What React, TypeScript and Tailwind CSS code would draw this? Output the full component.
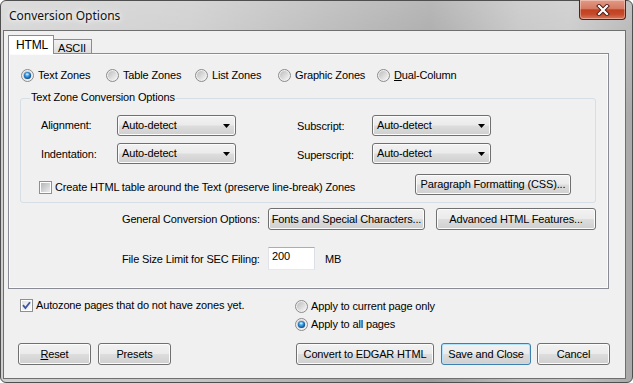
import React from "react";

const BTN_BG =
  "bg-[linear-gradient(180deg,#f2f2f2_0%,#ebebeb_48%,#dddddd_52%,#cfcfcf_100%)]";

function Radio({ checked = false }: { checked?: boolean }) {
  return (
    <svg width="13" height="13" viewBox="0 0 13 13" className="shrink-0">
      <defs>
        <linearGradient id="radioIn" x1="0" y1="0" x2="1" y2="1">
          <stop offset="0" stopColor="#bdbdbd" />
          <stop offset="1" stopColor="#f6f6f6" />
        </linearGradient>
        <radialGradient id="radioDot" cx="0.45" cy="0.4" r="0.6">
          <stop offset="0" stopColor="#7fd3ff" />
          <stop offset="0.55" stopColor="#2a8ad4" />
          <stop offset="1" stopColor="#0d3f78" />
        </radialGradient>
      </defs>
      <circle cx="6.5" cy="6.5" r="6" fill="#efefef" stroke="#8a8a8a" />
      <circle cx="6.5" cy="6.5" r="4.5" fill="url(#radioIn)" />
      {checked && (
        <>
          <circle cx="6.5" cy="6.5" r="3.6" fill="url(#radioDot)" />
          <ellipse cx="6.2" cy="5.2" rx="1.6" ry="1" fill="#ffffff" opacity="0.55" />
        </>
      )}
    </svg>
  );
}

function Check({ checked = false }: { checked?: boolean }) {
  return (
    <svg width="13" height="13" viewBox="0 0 13 13" className="shrink-0">
      <defs>
        <linearGradient id="chkIn" x1="0" y1="0" x2="1" y2="1">
          <stop offset="0" stopColor="#b3b6bb" />
          <stop offset="1" stopColor="#ececec" />
        </linearGradient>
        <linearGradient id="chkOn" x1="0" y1="0" x2="1" y2="1">
          <stop offset="0" stopColor="#dfe2e6" />
          <stop offset="1" stopColor="#fafafa" />
        </linearGradient>
      </defs>
      <rect x="0.5" y="0.5" width="12" height="12" fill="#fdfdfd" stroke="#8e8f8f" />
      <rect x="2" y="2" width="9" height="9" fill={checked ? "url(#chkOn)" : "url(#chkIn)"} />
      {checked && (
        <path d="M3 6.2 L5.4 9 L10 3.2" fill="none" stroke="#3a56a0" strokeWidth="1.8" />
      )}
    </svg>
  );
}

function Dropdown({ value }: { value: string }) {
  return (
    <div
      className={`flex h-[21px] w-[119px] items-center justify-between rounded-[3px] border border-[#707070] pl-[4px] pr-[5px] shadow-[inset_0_0_0_1px_#fbfbfb] ${BTN_BG}`}
    >
      <span>{value}</span>
      <svg width="7" height="4" viewBox="0 0 7 4">
        <path d="M0 0h7L3.5 4z" fill="#000" />
      </svg>
    </div>
  );
}

function Btn({
  className,
  children,
  primary = false,
}: {
  className: string;
  children: React.ReactNode;
  primary?: boolean;
}) {
  return (
    <button
      className={`flex shrink-0 items-center justify-center whitespace-nowrap rounded-[3px] border ${
        primary
          ? "border-[#3c7fb1] shadow-[inset_0_0_0_1px_#b3e2fc]"
          : "border-[#707070] shadow-[inset_0_0_0_1px_#fcfcfc]"
      } ${BTN_BG} ${className}`}
    >
      {children}
    </button>
  );
}

export default function App() {
  return (
    <div className="flex h-[383px] w-[633px] flex-col rounded-[6px] border border-[#4f4f4f] bg-[linear-gradient(180deg,rgba(255,255,255,0.28)_0%,rgba(255,255,255,0)_30%),linear-gradient(90deg,#cfcfcf_0%,#c6c6c6_30%,#aaaaaa_55%,#9c9c9c_68%,#bcbcbc_82%,#c2c2c2_90%,#a9a9a9_100%)] font-['Liberation_Sans',Arial,sans-serif] text-[11px] leading-[13px] tracking-[-0.15px] text-black">
      {/* title bar */}
      <div className="flex h-[29px] shrink-0 items-start justify-between">
        <div className="pl-[8px] pt-[7px] font-['Noto_Sans',sans-serif] text-[12px] leading-[16px] tracking-normal text-[#111] [text-shadow:0_0_8px_#fff,0_0_4px_#fff]">
          Conversion Options
        </div>
        <div className="mr-[6px] -mt-px flex h-[20px] w-[47px] items-center justify-center rounded-b-[4px] border border-t-0 border-[#5a1f17] bg-[linear-gradient(180deg,#e39a86_0%,#d47a62_45%,#c2401f_52%,#c44a2b_75%,#d9795c_100%)] shadow-[inset_0_0_0_1px_rgba(255,255,255,0.35)]">
          <svg width="14" height="12" viewBox="0 0 14 12">
            <path d="M3 2 L11 10 M11 2 L3 10" stroke="#4a1a14" strokeWidth="4" strokeLinecap="square" />
            <path d="M3 2 L11 10 M11 2 L3 10" stroke="#ffffff" strokeWidth="2.2" strokeLinecap="square" />
          </svg>
        </div>
      </div>

      {/* client area */}
      <div className="ml-[2px] mr-[6px] flex h-[349px] w-[623px] shrink-0 flex-col border border-[#6f6f6f] bg-[#f0f0f0]">
        {/* tabs */}
        <div className="ml-[4px] mt-[4px] flex h-[18px] items-end">
          <div className="relative z-10 -mb-px flex h-[19px] w-[46px] items-start border border-b-0 border-[#898c95] bg-white pl-[7px] pt-[3px] text-[12px]">
            HTML
          </div>
          <div className="-ml-px flex h-[14px] w-[39px] items-start border border-b-0 border-[#898c95] bg-[linear-gradient(180deg,#f2f2f2,#dedede)] pl-[4px] pt-[2px]">
            ASCII
          </div>
        </div>

        {/* tab page */}
        <div className="ml-[4px] flex h-[236px] w-[601px] flex-col border border-[#898c95] bg-[#f0f0f0] shadow-[inset_0_0_0_1px_#fbfbfb]">
          <div className="ml-[12px] mt-[15px] flex h-[13px] items-center">
            <label className="flex w-[85px] items-center gap-[4px]">
              <Radio checked />
              <span>Text Zones</span>
            </label>
            <label className="flex w-[89px] items-center gap-[4px]">
              <Radio />
              <span>Table Zones</span>
            </label>
            <label className="flex w-[83px] items-center gap-[4px]">
              <Radio />
              <span>List Zones</span>
            </label>
            <label className="flex w-[99px] items-center gap-[4px]">
              <Radio />
              <span>Graphic Zones</span>
            </label>
            <label className="flex items-center gap-[4px]">
              <Radio />
              <span>
                <span className="underline">D</span>ual-Column
              </span>
            </label>
          </div>

          {/* group box */}
          <div className="relative ml-[11px] mt-[16px] h-[105px] w-[576px] rounded-[3px] border border-[#d5dfe5] pt-[16px]">
            <span className="absolute left-[9px] top-[-8px] bg-[#f0f0f0] px-[1px]">
              Text Zone Conversion Options
            </span>
            <div className="flex h-[21px] items-center pl-[20px]">
              <span className="w-[76px]">Alignment:</span>
              <Dropdown value="Auto-detect" />
              <span className="ml-[61px] w-[75px] pt-[2px]">Subscript:</span>
              <Dropdown value="Auto-detect" />
            </div>
            <div className="mt-[7px] flex h-[21px] items-center pl-[20px]">
              <span className="w-[76px] pt-[2px]">Indentation:</span>
              <Dropdown value="Auto-detect" />
              <span className="ml-[61px] w-[75px] pt-[3px]">Superscript:</span>
              <Dropdown value="Auto-detect" />
            </div>
            <div className="mt-[10px] flex items-start pl-[18px]">
              <label className="mt-[7px] flex w-[376px] items-center gap-[3px]">
                <Check />
                <span>Create HTML table around the Text (preserve line-break) Zones</span>
              </label>
              <Btn className="h-[21px] w-[156px]">Paragraph Formatting (CSS)...</Btn>
            </div>
          </div>

          <div className="ml-[113px] mt-[5px] flex h-[22px] items-center">
            <span className="w-[146px]">General Conversion Options:</span>
            <Btn className="h-[22px] w-[157px]">Fonts and Special Characters...</Btn>
            <Btn className="ml-[11px] h-[22px] w-[160px]">Advanced HTML Features...</Btn>
          </div>

          <div className="ml-[113px] mt-[17px] flex h-[23px] items-center">
            <span className="w-[146px] pt-[2px]">File Size Limit for SEC Filing:</span>
            <div className="h-[23px] w-[47px] border border-[#abadb3] border-b-[#e3e9ef] border-l-[#e2e3ea] border-r-[#dbdfe6] bg-white pl-[3px] pt-[2px]">
              200
            </div>
            <span className="ml-[10px] pt-[2px]">MB</span>
          </div>
        </div>

        {/* below tabs */}
        <div className="flex h-[54px] pl-[16px]">
          <label className="mt-[10px] flex h-[13px] w-[275px] items-center gap-[3px] self-start">
            <Check checked />
            <span>Autozone pages that do not have zones yet.</span>
          </label>
          <div className="mt-[11px] flex flex-col gap-[5px]">
            <label className="flex h-[13px] items-center gap-[3px]">
              <Radio />
              <span>Apply to current page only</span>
            </label>
            <label className="flex h-[13px] items-center gap-[3px]">
              <Radio checked />
              <span>Apply to all pages</span>
            </label>
          </div>
        </div>

        <div className="flex h-[22px] items-stretch pl-[14px]">
          <Btn className="w-[73px]">
            <span>
              <span className="underline">R</span>eset
            </span>
          </Btn>
          <Btn className="ml-[7px] w-[73px]">Presets</Btn>
          <Btn className="ml-[125px] w-[138px]">Convert to EDGAR HTML</Btn>
          <Btn primary className="ml-[7px] w-[90px]">
            Save and Close
          </Btn>
          <Btn className="ml-[6px] w-[73px]">Cancel</Btn>
        </div>
      </div>
    </div>
  );
}
